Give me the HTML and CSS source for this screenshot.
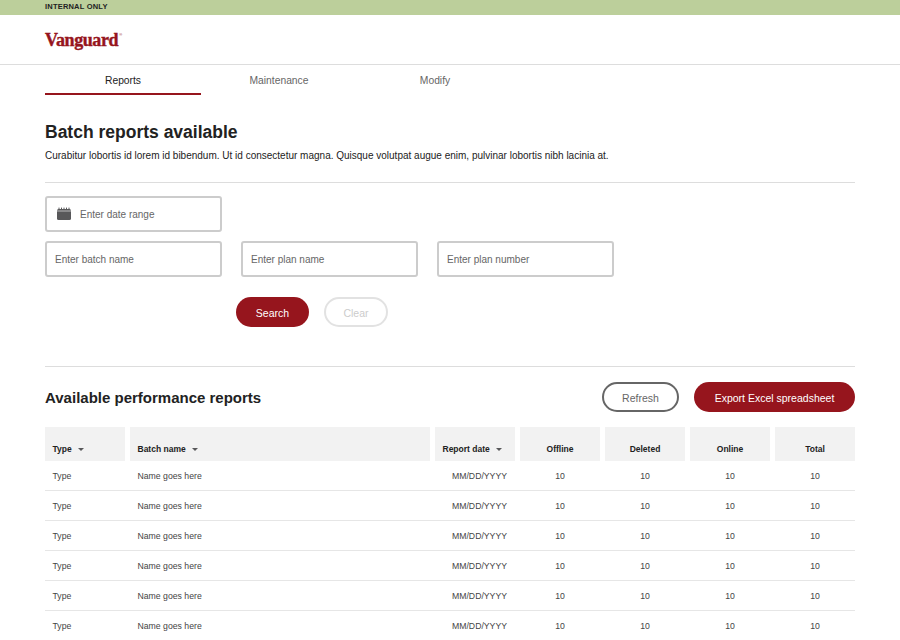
FILE: index.html
```html
<!DOCTYPE html>
<html lang="en">
<head>
    <meta charset="UTF-8">
    <meta name="viewport" content="width=device-width, initial-scale=1.0">
    <title>Batch reports available</title>
    <link rel="stylesheet" href="styles.css">
</head>
<body>
    <div class="banner">INTERNAL ONLY</div>
    <header class="header">
        <span class="logo">Vanguard<sup>®</sup></span>
    </header>
    <nav class="tabs">
        <a class="tab active">Reports</a>
        <a class="tab">Maintenance</a>
        <a class="tab">Modify</a>
    </nav>

    <main class="container">
        <h1>Batch reports available</h1>
        <p class="intro">Curabitur lobortis id lorem id bibendum. Ut id consectetur magna. Quisque volutpat augue enim, pulvinar lobortis nibh lacinia at.</p>

        <section class="filters">
            <div class="field date-field">
                <svg class="calendar" width="16" height="14" viewBox="0 0 16 14">
                    <path d="M1 3.5Q1 2 2.5 2H13.5Q15 2 15 3.5V11.5Q15 13 13.5 13H2.5Q1 13 1 11.5Z" fill="#58585a"/>
                    <path d="M3 .6V3M5.5 .6V3M8 .6V3M10.5 .6V3M13 .6V3" stroke="#58585a" stroke-width="1" fill="none"/>
                    <path d="M1 4H15" stroke="#fff" stroke-width=".6"/>
                </svg>
                Enter date range
            </div>
            <div class="field-row">
                <div class="field">Enter batch name</div>
                <div class="field">Enter plan name</div>
                <div class="field">Enter plan number</div>
            </div>
            <div class="actions">
                <button class="btn primary">Search</button>
                <button class="btn disabled">Clear</button>
            </div>
        </section>

        <section class="results">
            <div class="results-head">
                <h2>Available performance reports</h2>
                <div class="results-buttons">
                    <button class="btn outline">Refresh</button>
                    <button class="btn primary export">Export Excel spreadsheet</button>
                </div>
            </div>

            <div class="grid-row head">
                <div class="left">Type <i class="caret"></i></div>
                <div class="left">Batch name <i class="caret"></i></div>
                <div class="left">Report date <i class="caret"></i></div>
                <div>Offline</div>
                <div>Deleted</div>
                <div>Online</div>
                <div>Total</div>
            </div>
            <div class="grid-row">
                <div class="left">Type</div><div class="left">Name goes here</div><div class="date">MM/DD/YYYY</div><div>10</div><div>10</div><div>10</div><div>10</div>
            </div>
            <div class="grid-row">
                <div class="left">Type</div><div class="left">Name goes here</div><div class="date">MM/DD/YYYY</div><div>10</div><div>10</div><div>10</div><div>10</div>
            </div>
            <div class="grid-row">
                <div class="left">Type</div><div class="left">Name goes here</div><div class="date">MM/DD/YYYY</div><div>10</div><div>10</div><div>10</div><div>10</div>
            </div>
            <div class="grid-row">
                <div class="left">Type</div><div class="left">Name goes here</div><div class="date">MM/DD/YYYY</div><div>10</div><div>10</div><div>10</div><div>10</div>
            </div>
            <div class="grid-row">
                <div class="left">Type</div><div class="left">Name goes here</div><div class="date">MM/DD/YYYY</div><div>10</div><div>10</div><div>10</div><div>10</div>
            </div>
            <div class="grid-row">
                <div class="left">Type</div><div class="left">Name goes here</div><div class="date">MM/DD/YYYY</div><div>10</div><div>10</div><div>10</div><div>10</div>
            </div>
        </section>
    </main>
</body>
</html>
```

FILE: styles.css
```css
html, body {
    height: 640px;
    overflow: hidden;
}

body {
    font-family: "Liberation Sans", Arial, sans-serif;
    background-color: #fff;
    color: #222;
    margin: 0;
}

.banner {
    height: 15px;
    line-height: 14px;
    padding-left: 45px;
    background-color: #bccf9b;
    font-size: 7.5px;
    font-weight: bold;
    letter-spacing: 0.2px;
    color: #222;
}

.header {
    height: 50px;
    box-sizing: border-box;
    border-bottom: 1px solid #ddd;
    padding: 14px 45px 0;
}

.logo {
    font-family: "Liberation Serif", serif;
    font-size: 18px;
    font-weight: bold;
    line-height: 22px;
    letter-spacing: -0.4px;
    color: #96151d;
    -webkit-text-stroke: 0.4px #96151d;
}

.logo sup {
    font-family: "Liberation Sans", sans-serif;
    font-size: 4px;
    font-weight: normal;
    margin-left: 1px;
    vertical-align: 10px;
    line-height: 0;
    -webkit-text-stroke: 0;
}

.tabs {
    display: flex;
    padding-left: 45px;
}

.tab {
    width: 156px;
    height: 30px;
    box-sizing: border-box;
    line-height: 31px;
    text-align: center;
    font-size: 10.3px;
    color: #666;
}

.tab.active {
    color: #222;
    border-bottom: 2px solid #96151d;
}

.container {
    margin: 0 45px;
}

h1 {
    margin: 26px 0 0;
    font-size: 17.5px;
    line-height: 22px;
    color: #222;
}

.intro {
    margin: 6px 0 0;
    font-size: 10px;
    line-height: 14px;
    color: #222;
}

.filters {
    margin-top: 19px;
    padding-top: 13px;
    height: 185px;
    box-sizing: border-box;
    border-top: 1px solid #ddd;
    border-bottom: 1px solid #ddd;
}

.field {
    width: 177px;
    height: 36px;
    box-sizing: border-box;
    border: 2px solid #ccc;
    border-radius: 3px;
    padding-left: 8px;
    display: flex;
    align-items: center;
    font-size: 10px;
    color: #666;
}

.date-field {
    padding-left: 9px;
}

.calendar {
    margin-right: 8px;
}

.field-row {
    display: flex;
    gap: 19px;
    margin-top: 9px;
}

.actions {
    display: flex;
    gap: 15px;
    margin: 20px 0 0 191px;
}

.btn {
    height: 30px;
    box-sizing: border-box;
    border-radius: 15px;
    border: 2px solid transparent;
    padding: 1px 0 0;
    font-family: inherit;
    font-size: 10.5px;
    background: none;
}

.primary {
    width: 73px;
    background-color: #96151d;
    color: #fff;
}

.disabled {
    width: 64px;
    border-color: #e2e2e2;
    color: #ccc;
}

.outline {
    width: 77px;
    border-color: #666;
    color: #666;
}

.export {
    width: 161px;
}

.results {
    margin-top: 15px;
}

.results-head {
    display: flex;
    justify-content: space-between;
    align-items: center;
    height: 30px;
    margin-bottom: 15px;
}

h2 {
    margin: 0;
    font-size: 15px;
    color: #222;
}

.results-buttons {
    display: flex;
    gap: 15px;
}

.grid-row {
    display: grid;
    grid-template-columns: 80px 300px repeat(5, 80px);
    column-gap: 5px;
    height: 30px;
    padding-top: 1px;
    border-bottom: 1px solid #e6e6e6;
    box-sizing: border-box;
    font-size: 8.7px;
    color: #444;
    line-height: 28px;
    text-align: center;
}

.grid-row .left {
    text-align: left;
    padding-left: 7.5px;
}

.grid-row .date {
    text-align: right;
    padding-right: 8px;
}

.grid-row.head {
    height: 34px;
    padding-top: 0;
    border-bottom: 0;
    font-size: 8.5px;
    font-weight: bold;
    color: #222;
    line-height: 14px;
}

.head > div {
    background-color: #f2f2f2;
    padding-top: 15px;
}

.caret {
    display: inline-block;
    margin-left: 4px;
    vertical-align: 1px;
    border-left: 3px solid transparent;
    border-right: 3px solid transparent;
    border-top: 3px solid #58585a;
}
```
